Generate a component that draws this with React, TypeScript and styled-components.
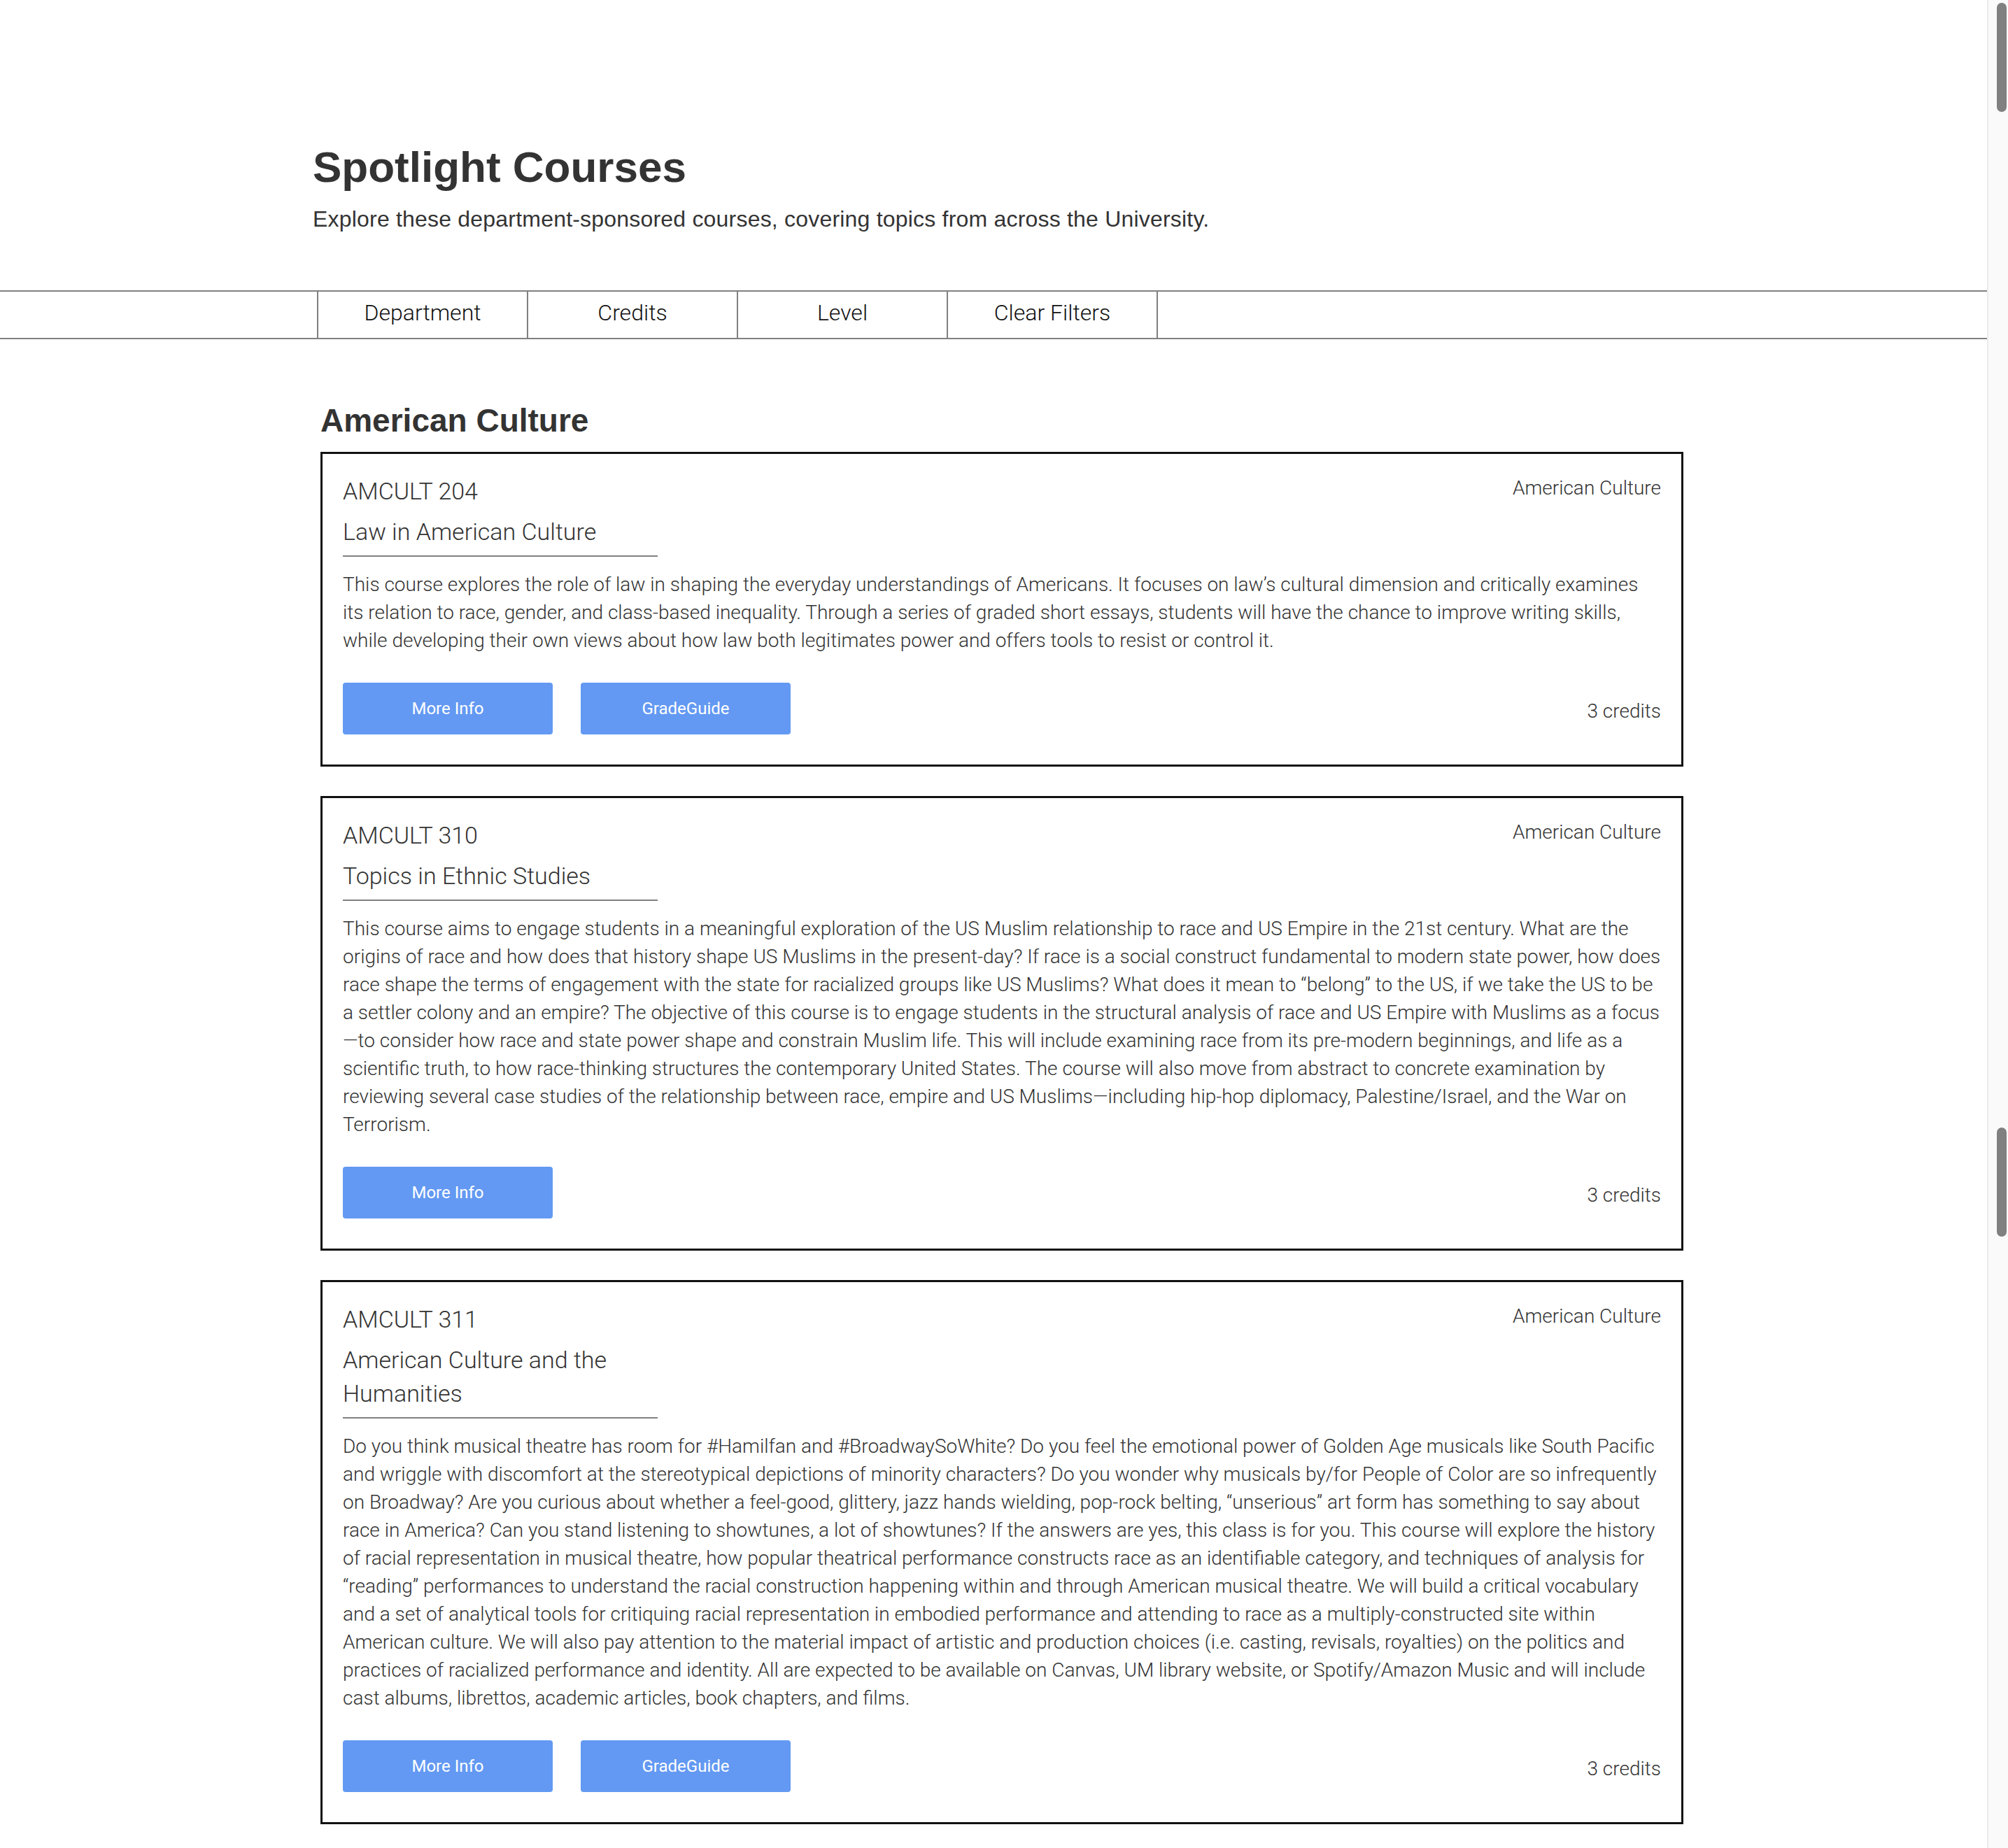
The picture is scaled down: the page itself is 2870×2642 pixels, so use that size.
import React from "react";
import styled, { createGlobalStyle } from "styled-components";

const GlobalStyle = createGlobalStyle`
  html, body {
    margin: 0;
    padding: 0;
    background: #ffffff;
  }
  body {
    font-family: Roboto, "Liberation Sans", sans-serif;
    color: #333333;
  }
  * { box-sizing: border-box; }
`;

const Page = styled.div`
  display: flex;
  height: 100vh;
  overflow: hidden;
  background: #ffffff;
`;

const Main = styled.main`
  flex: 1;
  min-width: 0;
`;

const Header = styled.header`
  padding: 202px 0 0 447px;
`;

const Title = styled.h1`
  margin: 0;
  font-family: "Liberation Sans", Arial, sans-serif;
  font-weight: 700;
  font-size: 62px;
  line-height: 74px;
  color: #333333;
`;

const Subtitle = styled.p`
  margin: 17px 0 0;
  font-family: "Liberation Sans", Arial, sans-serif;
  font-weight: 400;
  font-size: 32px;
  line-height: 40px;
  letter-spacing: 0.2px;
  color: #333333;
`;

const FilterBar = styled.nav`
  margin-top: 82px;
  display: flex;
  padding-left: 453px;
  border-top: 2px solid #808080;
  border-bottom: 2px solid #808080;
`;

const FilterCell = styled.button`
  width: 300px;
  height: 66px;
  display: flex;
  align-items: center;
  justify-content: center;
  background: transparent;
  border: none;
  border-right: 2px solid #808080;
  padding: 0 0 6px;
  font-family: Roboto, "Liberation Sans", sans-serif;
  font-weight: 300;
  font-size: 32px;
  color: #111111;
  &:first-child {
    width: 302px;
    border-left: 2px solid #808080;
  }
`;

const Content = styled.section`
  padding-left: 458px;
  padding-top: 88px;
`;

const SectionHeading = styled.h2`
  margin: 0 0 17px;
  font-family: "Liberation Sans", Arial, sans-serif;
  font-weight: 700;
  font-size: 46px;
  line-height: 56px;
  color: #333333;
`;

const CardList = styled.div`
  display: flex;
  flex-direction: column;
  gap: 42px;
  width: 1948px;
`;

const Card = styled.article`
  border: 3px solid #111111;
  padding: 29px 29px 43px;
`;

const CardTop = styled.div`
  display: flex;
  justify-content: space-between;
  align-items: flex-start;
`;

const Heading = styled.div`
  display: flex;
  flex-direction: column;
  gap: 10px;
`;

const CourseNumber = styled.div`
  font-weight: 300;
  font-size: 34px;
  line-height: 48px;
  color: #333333;
`;

const CourseTitle = styled.div`
  width: 450px;
  padding-bottom: 10px;
  border-bottom: 2px solid #808080;
  font-weight: 300;
  font-size: 34px;
  line-height: 48px;
  color: #333333;
`;

const DeptTag = styled.div`
  font-weight: 300;
  font-size: 28px;
  line-height: 40px;
  color: #333333;
`;

const Description = styled.p`
  margin: 20px 0 0;
  font-weight: 300;
  font-size: 28px;
  line-height: 40px;
  color: #333333;
`;

const CardFooter = styled.div`
  margin-top: 40px;
  display: flex;
  justify-content: space-between;
  align-items: center;
`;

const Buttons = styled.div`
  display: flex;
  gap: 40px;
`;

const ActionButton = styled.button`
  width: 300px;
  height: 74px;
  border: none;
  border-radius: 4px;
  background: #6399f2;
  color: #ffffff;
  font-family: Roboto, "Liberation Sans", sans-serif;
  font-weight: 400;
  font-size: 24px;
  padding: 0;
`;

const Credits = styled.div`
  padding-top: 8px;
  font-weight: 300;
  font-size: 28px;
  line-height: 40px;
  color: #333333;
`;

const ScrollTrack = styled.div`
  width: 30px;
  flex: none;
  background: #fafafa;
  border-left: 2px solid #ececec;
  padding: 4px 0 0 12px;
  display: flex;
  flex-direction: column;
`;

const Thumb = styled.div<{ $offset: number }>`
  width: 14px;
  height: 156px;
  margin-top: ${(p) => p.$offset}px;
  border-radius: 7px;
  background: #808080;
`;

type Course = {
  number: string;
  title: string;
  dept: string;
  description: string;
  credits: string;
  gradeGuide: boolean;
};

const courses: Course[] = [
  {
    number: "AMCULT 204",
    title: "Law in American Culture",
    dept: "American Culture",
    description:
      "This course explores the role of law in shaping the everyday understandings of Americans. It focuses on law\u2019s cultural dimension and critically examines its relation to race, gender, and class-based inequality. Through a series of graded short essays, students will have the chance to improve writing skills, while developing their own views about how law both legitimates power and offers tools to resist or control it.",
    credits: "3 credits",
    gradeGuide: true,
  },
  {
    number: "AMCULT 310",
    title: "Topics in Ethnic Studies",
    dept: "American Culture",
    description:
      "This course aims to engage students in a meaningful exploration of the US Muslim relationship to race and US Empire in the 21st century. What are the origins of race and how does that history shape US Muslims in the present-day? If race is a social construct fundamental to modern state power, how does race shape the terms of engagement with the state for racialized groups like US Muslims? What does it mean to \u201cbelong\u201d to the US, if we take the US to be a settler colony and an empire? The objective of this course is to engage students in the structural analysis of race and US Empire with Muslims as a focus\u2014to consider how race and state power shape and constrain Muslim life. This will include examining race from its pre-modern beginnings, and life as a scientific truth, to how race-thinking structures the contemporary United States. The course will also move from abstract to concrete examination by reviewing several case studies of the relationship between race, empire and US Muslims\u2014including hip-hop diplomacy, Palestine/Israel, and the War on Terrorism.",
    credits: "3 credits",
    gradeGuide: false,
  },
  {
    number: "AMCULT 311",
    title: "American Culture and the Humanities",
    dept: "American Culture",
    description:
      "Do you think musical theatre has room for #Hamilfan and #BroadwaySoWhite? Do you feel the emotional power of Golden Age musicals like South Pacific and wriggle with discomfort at the stereotypical depictions of minority characters? Do you wonder why musicals by/for People of Color are so infrequently on Broadway? Are you curious about whether a feel-good, glittery, jazz hands wielding, pop-rock belting, \u201cunserious\u201d art form has something to say about race in America? Can you stand listening to showtunes, a lot of showtunes? If the answers are yes, this class is for you. This course will explore the history of racial representation in musical theatre, how popular theatrical performance constructs race as an identifiable category, and techniques of analysis for \u201creading\u201d performances to understand the racial construction happening within and through American musical theatre. We will build a critical vocabulary and a set of analytical tools for critiquing racial representation in embodied performance and attending to race as a multiply-constructed site within American culture. We will also pay attention to the material impact of artistic and production choices (i.e. casting, revisals, royalties) on the politics and practices of racialized performance and identity. All are expected to be available on Canvas, UM library website, or Spotify/Amazon Music and will include cast albums, librettos, academic articles, book chapters, and films.",
    credits: "3 credits",
    gradeGuide: true,
  },
];

const filters = ["Department", "Credits", "Level", "Clear Filters"];

export default function App() {
  return (
    <>
      <GlobalStyle />
      <Page>
        <Main>
          <Header>
            <Title>Spotlight Courses</Title>
            <Subtitle>
              Explore these department-sponsored courses, covering topics from across the University.
            </Subtitle>
          </Header>
          <FilterBar>
            {filters.map((f) => (
              <FilterCell key={f}>{f}</FilterCell>
            ))}
          </FilterBar>
          <Content>
            <SectionHeading>American Culture</SectionHeading>
            <CardList>
              {courses.map((c) => (
                <Card key={c.number}>
                  <CardTop>
                    <Heading>
                      <CourseNumber>{c.number}</CourseNumber>
                      <CourseTitle>{c.title}</CourseTitle>
                    </Heading>
                    <DeptTag>{c.dept}</DeptTag>
                  </CardTop>
                  <Description>{c.description}</Description>
                  <CardFooter>
                    <Buttons>
                      <ActionButton>More Info</ActionButton>
                      {c.gradeGuide && <ActionButton>GradeGuide</ActionButton>}
                    </Buttons>
                    <Credits>{c.credits}</Credits>
                  </CardFooter>
                </Card>
              ))}
            </CardList>
          </Content>
        </Main>
        <ScrollTrack>
          <Thumb $offset={0} />
          <Thumb $offset={1452} />
        </ScrollTrack>
      </Page>
    </>
  );
}
